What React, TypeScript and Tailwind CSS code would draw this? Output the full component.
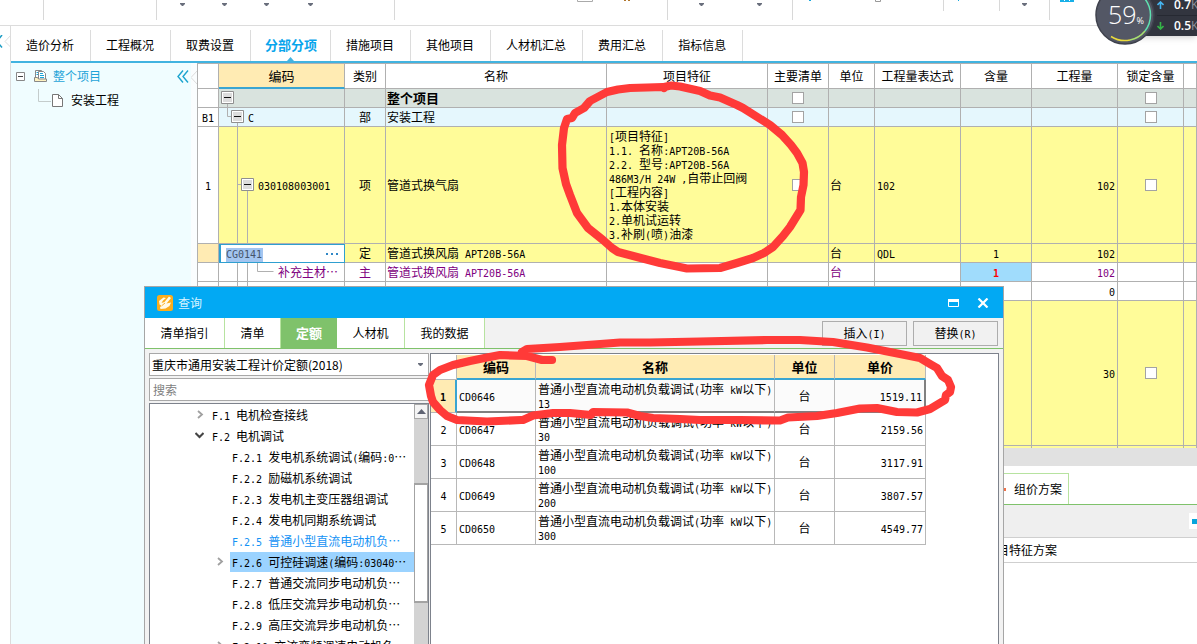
import { Fragment, type ReactNode } from 'react';
import clsx from 'clsx';

const CJK = "font-['Noto_Sans_CJK_SC','Liberation_Sans',sans-serif]";
const MONO = "font-['DejaVu_Sans_Mono','Liberation_Mono',monospace] text-[10px] leading-none whitespace-pre-wrap";

// Latin runs are half as wide as a Chinese character, as in the grid's own font
function Mix({ children }: { children: string }) {
  return (
    <>
      {children.split(/([\x20-\x7e]+)/).filter(Boolean).map((part, i) =>
        /^[\x20-\x7e]/.test(part)
          ? <span key={i} className={MONO}>{part}</span>
          : <Fragment key={i}>{part}</Fragment>
      )}
    </>
  );
}

interface RibbonGroup { w: string; carets?: number[]; short?: boolean; extra?: ReactNode }

const ribbon: RibbonGroup[] = [
  { w: 'w-[44px]' },
  { w: 'w-[113px]' },
  { w: 'w-[238px]', carets: [25, 67, 109, 153] },
  { w: 'w-[273px]', extra: <><path d="M182.500 -3v4.500h15v-4.500" fill="none" stroke="#aaa" /><path d="M229 0h2v1h-2zM233 0h2v1h-2z" fill="#b0762c" /></> },
  { w: 'w-[125px]', carets: [33, 91] },
  { w: 'w-[151px]', short: true, extra: <><path d="M16 0h2v1h-2z" fill="#18a8dd" /><path d="M82.500 -3v4.500h5v-4.500" fill="none" stroke="#999" /></> },
  { w: 'w-[56px]', short: true, extra: <path d="M14 0h1v1h-1z" fill="#18a8dd" /> },
  { w: 'w-[50px]', carets: [24] },
];

const tabs = ['造价分析', '工程概况', '取费设置', '分部分项', '措施项目', '其他项目', '人材机汇总', '费用汇总', '指标信息'];

function Ribbon() {
  return (
    <header className="flex h-[26px] shrink-0 overflow-hidden border-b border-[#dcdcdc] bg-white">
      {ribbon.map((g, i) => (
        <div key={i} className={clsx('shrink-0 border-r border-[#d8d8d8]', g.w, g.short ? 'h-[11px]' : 'h-5')}>
          <svg className="h-full w-full" aria-hidden="true">
            {g.carets?.map((x) => <path key={x} d={`M${x - 2} 3h5v1l-2 2h-1l-2-2z`} fill="#696e7c" />)}
            {g.extra}
          </svg>
        </div>
      ))}
      <svg className="ml-[10px] h-[2px] w-[14px]" aria-hidden="true">
        <path d="M0 0h14v2H0z" fill="#18b0e8" /><path d="M4 0h1v1h-1zM9 0h1v1h-1z" fill="#fff" />
      </svg>
    </header>
  );
}

function TabBar() {
  return (
    <nav className="flex h-[37px] shrink-0 items-stretch border-b-2 border-[#41b3e0] bg-white pt-1">
      {tabs.map((t) => {
        const active = t === '分部分项';
        return (
          <button
            key={t}
            className={clsx(
              'relative shrink-0 border-r border-[#dcdcdc] pb-0.5',
              active ? 'pr-[13px] pl-3.5 text-[13px] font-bold text-[#08a5ec]' : 'pr-4 pl-[15px]',
            )}
          >
            {t}
            {active && (
              <svg className="absolute bottom-0 left-9 h-1 w-[7px]" viewBox="0 0 7 4" aria-hidden="true"><path d="M0 4 3.500 0 7 4z" fill="#41b3e0" /></svg>
            )}
          </button>
        );
      })}
    </nav>
  );
}

function ProjectTree() {
  return (
    <aside className="w-[180px] shrink-0 bg-[#f0fdff] pt-[3px]">
      <div className="flex h-5 items-center pl-[5px]">
        <svg width="9" height="9" aria-hidden="true"><path d="M.5.5h8v8h-8z" fill="#fff" stroke="#888" /><path d="M2 4h5v1H2z" fill="#444" /></svg>
        <svg className="ml-[9px]" width="13" height="12" viewBox="0 0 13 12" aria-hidden="true">
          <path d="M1.500 9V.5h6l1 1" fill="#fff" stroke="#888" />
          <path d="M4.500 9V1.500h5l2 2V9" fill="#fff" stroke="#888" />
          <path d="M2.500 2.500h1.500M2.500 4.500h1.500M6 3.500h3M6 5.500h4M6 7.500h4" stroke="#1ba4d6" />
          <path d="M.5 7.500h3l1 1.500h8v2.500H.5z" fill="#fff2c0" stroke="#888" />
        </svg>
        <span className="ml-1.5 text-[#1ea4d8]">整个项目</span>
        <button className="mr-0.5 ml-auto" aria-label="收起">
          <svg width="12" height="13" viewBox="0 0 12 13" fill="none" stroke="#1ba4cf" strokeWidth="1.400" aria-hidden="true">
            <path d="M6 .5 1 6.500l5 6M11 .5 6 6.500l5 6" />
          </svg>
        </button>
      </div>
      <div className="flex h-7 items-center pl-[27px]">
        <svg width="13" height="14" className="mb-2" aria-hidden="true"><path d="M.5 0v12.500H13" fill="none" stroke="#c4cccc" /></svg>
        <svg className="ml-px" width="11" height="13" aria-hidden="true">
          <path d="M.5.5h6l4 4v8H.5z" fill="#fff" stroke="#777" /><path d="M6.500.5v4h4" fill="none" stroke="#777" />
        </svg>
        <span className="ml-2">安装工程</span>
      </div>
    </aside>
  );
}

interface GridRow {
  id: string; no: string; tone: string; height: string;
  code: ReactNode; lines?: string; box?: [number, number];
  kind?: string; name?: string; feature?: string[];
  main?: boolean; unit?: string; expr?: string; ratio?: string; qty?: string; lock?: boolean;
  purple?: boolean; bold?: boolean; editing?: boolean;
}

const gridRows: GridRow[] = [
  { id: 'root', no: '', tone: 'bg-[#d9e3de]', height: 'h-[19px]', code: '', lines: 'M8.500 15v4', box: [2, 2], name: '整个项目', main: true, lock: true, bold: true },
  { id: 'b1', no: 'B1', tone: 'bg-[#e5f7fd]', height: 'h-[19px]', code: <span className="pl-[29px]"><Mix>C</Mix></span>, lines: 'M8.500 0v8.500h4M18.500 15v4', box: [12, 2], kind: '部', name: '安装工程', main: true, lock: true },
  {
    id: 'fan', no: '1', tone: 'bg-[#fffc99]', height: 'h-[117px]', code: <span className="pl-[39px]"><Mix>030108003001</Mix></span>,
    lines: 'M18.500 0v117M18.500 57.500h4M28.500 64v53', box: [22, 51], kind: '项', name: '管道式换气扇',
    feature: ['[项目特征]', '1.1. 名称:APT20B-56A', '2.2. 型号:APT20B-56A', '486M3/H 24W ,自带止回阀', '[工程内容]', '1.本体安装', '2.单机试运转', '3.补刷(喷)油漆'],
    main: true, unit: '台', expr: '102', qty: '102', lock: true,
  },
  { id: 'cg', no: '', tone: 'bg-[#fffc99]', height: 'h-[19px]', code: '', editing: true, kind: '定', name: '管道式换风扇 APT20B-56A', unit: '台', expr: 'QDL', ratio: '1', qty: '102' },
  { id: 'extra', no: '', tone: 'bg-white', height: 'h-[19px]', code: <span className="pl-[59px]">补充主材…</span>, lines: 'M18.500 0v19M28.500 0v19M38.500 0v8.500h16', kind: '主', name: '管道式换风扇 APT20B-56A', unit: '台', ratio: '1', qty: '102', purple: true },
  { id: 'blank', no: '', tone: 'bg-white', height: 'h-[19px]', code: '', lines: 'M18.500 0v19M28.500 0v19', qty: '0' },
  { id: 'two', no: '', tone: 'bg-[#fffc99]', height: 'h-[145px]', code: '', lines: 'M18.500 0v145', qty: '30', lock: true },
];

const gridHeads: [string, string][] = [
  ['', 'w-[21px]'], ['编码', 'w-[126px]'], ['类别', 'w-[41px]'], ['名称', 'w-[221px]'], ['项目特征', 'w-[161px]'], ['主要清单', 'w-[61px]'],
  ['单位', 'w-[46px]'], ['工程量表达式', 'w-[86px]'], ['含量', 'w-[71px]'], ['工程量', 'w-[86px]'], ['锁定含量', 'w-[66px]'], ['', ''],
];

const cell = 'border-r border-b border-[#b0b0b0] p-0 leading-[14px]';

function Tick({ label }: { label: string }) {
  return <input type="checkbox" aria-label={label} className="mx-auto block size-3 appearance-none border border-[#a3a3a3] bg-white" />;
}

function CodeCell({ row }: { row: GridRow }) {
  if (row.editing) {
    return (
      <td className="border border-l-2 border-[#2f9fd0] bg-white p-0">
        <div className="flex h-[16px] items-center justify-between pr-1.5 pl-[5px]">
          <input aria-label="编码" defaultValue="CG0141" className={clsx(MONO, 'mt-0.5 h-[14px] w-[37px] bg-[#a3c5f0] p-0 text-[#44546c]')} />
          <button aria-label="选择">
            <svg width="12" height="2" aria-hidden="true"><path d="M0 0h2v2H0zM5 0h2v2H5zM10 0h2v2h-2z" fill="#2f87c6" /></svg>
          </button>
        </div>
      </td>
    );
  }
  return (
    <td className={cell}>
      <div className={clsx('relative -mb-px flex items-center pb-px', row.height)}>
        <svg className="absolute inset-0 h-full w-full" aria-hidden="true">
          {row.lines && <path d={row.lines} fill="none" stroke="#b0b0b0" />}
          {row.box && (
            <g transform={`translate(${row.box[0]} ${row.box[1]})`}>
              <path d="M.5.5h12v12H.5z" fill="#fff" stroke="#8f8f8f" />
              <path d="M2 2h9v9H2z" fill="#dcdcdc" />
              <path d="M3 6h7v1H3z" fill="#111" />
            </g>
          )}
        </svg>
        {row.code}
      </div>
    </td>
  );
}

function BillGrid() {
  return (
    <table className="w-full table-fixed border-separate border-spacing-0 border-t border-l border-[#b0b0b0]">
      <thead>
        <tr>
          {gridHeads.map(([h, w], i) => (
            <th
              key={i}
              className={clsx('h-[25px] border-r border-b border-[#b0b0b0] p-0 font-normal whitespace-nowrap', w, i === 1 && 'border-b-2 border-b-[#3aa5d2] bg-[#ffebb3] text-[13px] font-bold')}
            >
              {h}
            </th>
          ))}
        </tr>
      </thead>
      <tbody>
        {gridRows.map((r) => (
          <tr key={r.id} className={clsx(r.height, r.tone, r.purple && 'text-[#800080]')}>
            <td className={clsx(cell, 'text-center', r.editing ? 'bg-[#ffebb3]' : 'bg-white')}><Mix>{r.no}</Mix></td>
            <CodeCell row={r} />
            <td className={clsx(cell, 'text-center')}>{r.kind}</td>
            <td className={clsx(cell, 'pl-px', r.bold && 'text-[13px] font-bold')}><Mix>{r.name ?? ''}</Mix></td>
            <td className={clsx(cell, 'pl-0.5')}>
              {r.feature?.map((f) => <div key={f} className="h-[14px]"><Mix>{f}</Mix></div>)}
            </td>
            <td className={cell}>{r.main && <Tick label="主要清单" />}</td>
            <td className={clsx(cell, 'pl-px')}>{r.unit}</td>
            <td className={clsx(cell, 'pl-0.5')}><Mix>{r.expr ?? ''}</Mix></td>
            <td className={clsx(cell, 'text-center', r.purple && 'bg-[#a0dcfc] font-bold text-[#ff0000]')}><Mix>{r.ratio ?? ''}</Mix></td>
            <td className={clsx(cell, 'pr-0.5 text-right')}><Mix>{r.qty ?? ''}</Mix></td>
            <td className={cell}>{r.lock && <Tick label="锁定含量" />}</td>
            <td className={cell} />
          </tr>
        ))}
        <tr className="h-0.5 bg-[#fffc99]">
          {gridHeads.map((_, i) => <td key={i} className="border-r border-[#b0b0b0] p-0" />)}
        </tr>
      </tbody>
    </table>
  );
}

function SchemePanel() {
  return (
    <section className="flex flex-1 flex-col bg-white">
      <div className="h-[18px] bg-[#e1e1e1]" />
      <div className="flex h-[39px] items-end border-b border-[#7fc26b] pl-[790px]">
        <button className="relative h-[31px] border-t border-r border-[#b7e3a0] pr-1.5 pl-[27px]">
          <span className="absolute top-3.5 left-4 size-[3px] bg-[#f07048]" />
          组价方案
        </button>
      </div>
      <div className="flex h-[33px] items-center justify-end border-b border-[#cfcfcf] bg-[#efefef]">
        <div className="flex h-4 w-2 items-center justify-end bg-white"><span className="h-[5px] w-[5px] bg-[#08a5dc]" /></div>
      </div>
      <div className="flex h-[25px] items-center border-b border-[#cfcfcf] pl-[788px]">项目特征方案</div>
    </section>
  );
}

interface TreeNode { text: string; level: 1 | 2; arrow?: 'open' | 'closed'; state?: 'link' | 'selected' }

const treeNodes: TreeNode[] = [
  { text: 'F.1 电机检查接线', level: 1, arrow: 'closed' },
  { text: 'F.2 电机调试', level: 1, arrow: 'open' },
  { text: 'F.2.1 发电机系统调试(编码:0…', level: 2 },
  { text: 'F.2.2 励磁机系统调试', level: 2 },
  { text: 'F.2.3 发电机主变压器组调试', level: 2 },
  { text: 'F.2.4 发电机同期系统调试', level: 2 },
  { text: 'F.2.5 普通小型直流电动机负…', level: 2, state: 'link' },
  { text: 'F.2.6 可控硅调速(编码:03040…', level: 2, arrow: 'closed', state: 'selected' },
  { text: 'F.2.7 普通交流同步电动机负…', level: 2 },
  { text: 'F.2.8 低压交流异步电动机负…', level: 2 },
  { text: 'F.2.9 高压交流异步电动机负…', level: 2 },
  { text: 'F.2.10 交流变频调速电动机负…', level: 2, arrow: 'closed' },
];

const quotas = [
  { code: 'CD0646', size: '13',  price: '1519.11' },
  { code: 'CD0647', size: '30',  price: '2159.56' },
  { code: 'CD0648', size: '100', price: '3117.91' },
  { code: 'CD0649', size: '200', price: '3807.57' },
  { code: 'CD0650', size: '300', price: '4549.77' },
];

function QuotaTree() {
  return (
    <div className="flex min-h-0 flex-1 overflow-hidden border border-b-0 border-[#7d828c] bg-white">
      <ul className="min-w-0 flex-1">
        {treeNodes.map((n) => (
          <li key={n.text} className={clsx('flex h-[21px] items-center', n.level === 1 ? 'pl-[43px]' : 'pl-[63px]')}>
            <span className={clsx('w-[17px] shrink-0', n.arrow === 'open' ? 'pl-0.5' : 'pl-1')}>
              {n.arrow === 'closed' && (
                <svg width="7" height="9" viewBox="0 0 7 9" fill="none" stroke="#a0a0a0" strokeWidth="1.800" aria-hidden="true"><path d="m1 1 4 3.500L1 8" /></svg>
              )}
              {n.arrow === 'open' && (
                <svg width="9" height="7" viewBox="0 0 9 7" fill="none" stroke="#444" strokeWidth="2" aria-hidden="true"><path d="m.5 1 4 4 4-4" /></svg>
              )}
            </span>
            <span
              className={clsx(
                'flex-1 truncate pl-0.5 leading-5',
                n.state === 'selected' && 'bg-[#9bd3ff]',
                n.state === 'link' && 'text-[#1492f5]',
              )}
            >
              <Mix>{n.text}</Mix>
            </span>
          </li>
        ))}
      </ul>
      <div className="flex w-[14px] shrink-0 flex-col bg-[#d3d3d3]">
        <button aria-label="向上滚动" className="flex h-[15px] items-center justify-center border border-[#a8a8a8] bg-[#f4f4f4]">
          <svg width="9" height="5" aria-hidden="true"><path d="M0 5 4.500 0 9 5z" fill="#5f6473" /></svg>
        </button>
        <div className="mt-16 h-[120px] border border-t-2 border-b-2 border-[#a3a3a3] bg-white" />
      </div>
    </div>
  );
}

function QuotaTable() {
  const td = 'border-r border-b border-[#b8b8b8] p-0';
  const th = 'h-[25px] border-r border-b-2 border-[#b8b8b8] border-b-[#3aa5d2] bg-[#ffebb3] p-0 text-[13px] font-bold';
  return (
    <div className="min-w-0 flex-1 overflow-hidden border border-b-0 border-[#7d828c] bg-white pt-px">
      <table className="table-fixed border-separate border-spacing-0">
        <thead>
          <tr>
            <th className="w-[26px] border-r border-b border-[#b8b8b8] p-0" />
            <th className={clsx(th, 'w-[79px]')}>编码</th>
            <th className={clsx(th, 'w-[239px]')}>名称</th>
            <th className={clsx(th, 'w-[60px]')}>单位</th>
            <th className={clsx(th, 'w-[91px]')}>单价</th>
          </tr>
        </thead>
        <tbody>
          {quotas.map((q, i) => {
            const on = i === 0;
            const line = on && 'border-b-2 border-b-[#808080] bg-[#fbfbfb]';
            return (
              <tr key={q.code} className="h-[33px]">
                <td className={clsx(td, 'text-center', on && 'border-r-2 border-r-[#3aa5d2] bg-[#ffebb3] font-bold')}><Mix>{String(i + 1)}</Mix></td>
                <td className={clsx(td, 'pl-0.5', line)}><Mix>{q.code}</Mix></td>
                <td className={clsx(td, 'pl-0.5 leading-[14px] whitespace-nowrap', line)}>
                  <Mix>普通小型直流电动机负载调试(功率 kW以下)</Mix>
                  <div className="h-[14px]"><Mix>{q.size}</Mix></div>
                </td>
                <td className={clsx(td, 'text-center', line)}>台</td>
                <td className={clsx(td, 'pr-0.5 text-right', line, on && 'border-r-2 border-r-[#808080]')}><Mix>{q.price}</Mix></td>
              </tr>
            );
          })}
        </tbody>
      </table>
    </div>
  );
}

function QueryDialog() {
  const tab = 'h-full border-r border-[#b7e3a0] bg-white';
  return (
    <section role="dialog" aria-label="查询" className="absolute top-[286px] right-[193px] bottom-0 left-[144px] flex flex-col border border-b-0 border-[#a6a6a6] bg-[#f2f2f2]">
      <div className="flex h-[31px] shrink-0 items-center bg-[#02a9f3] pr-[14px] pl-3 text-[#d9f4ff]">
        <svg width="16" height="16" viewBox="0 0 16 16" aria-hidden="true">
          <rect width="16" height="16" rx="2.500" fill="#fbad1c" />
          <path d="M2 6 6.500 2.500 9 3 6 5.500 4.500 8 7.500 7 12 1.500 14 3 9.500 8.500 14 7.500 12.500 11 8.500 13.500 3.500 14 3 12 5 11 2.500 9.500z" fill="#fffbe8" />
          <path d="M5 10.500 8 8" stroke="#fbad1c" strokeWidth=".9" />
        </svg>
        <span className="ml-[5px]">查询</span>
        <button aria-label="最大化" className="mr-[18px] ml-auto">
          <svg width="11" height="8" aria-hidden="true"><path d="M.5.5h10v7H.5z" fill="none" stroke="#fff" /><path d="M0 0h11v3H0z" fill="#fff" /></svg>
        </button>
        <button aria-label="关闭">
          <svg width="12" height="10" viewBox="0 0 12 10" stroke="#fff" strokeWidth="2.200" aria-hidden="true"><path d="m1.500.5 9 9M10.500.5l-9 9" /></svg>
        </button>
      </div>
      <div className="flex h-[31px] shrink-0 items-center border-b border-[#7fc26b] pr-[5px]">
        <button className={clsx(tab, 'w-20')}>清单指引</button>
        <button className={clsx(tab, 'w-14')}>清单</button>
        <button className="h-full w-14 bg-[#7fc26b] text-[13px] font-bold text-white">定额</button>
        <button className={clsx(tab, 'w-[68px]')}>人材机</button>
        <button className={clsx(tab, 'w-20')}>我的数据</button>
        <div className="ml-auto flex gap-1.5">
          <button className="h-[25px] w-[85px] border border-[#adadad] bg-[#f1f1f1]"><Mix>插入(I)</Mix></button>
          <button className="h-[25px] w-[85px] border border-[#adadad] bg-[#f1f1f1]"><Mix>替换(R)</Mix></button>
        </div>
      </div>
      <div className="flex min-h-0 flex-1 gap-px px-1 pt-1">
        <div className="flex w-[280px] shrink-0 flex-col gap-0.5">
          <div className="relative">
            <select aria-label="定额库" className="block h-[23px] w-full appearance-none border border-[#a8a8a8] bg-white pl-0.5">
              <option>重庆市通用安装工程计价定额(2018)</option>
            </select>
            <svg className="pointer-events-none absolute top-2.5 right-1.5" width="5" height="3" aria-hidden="true"><path d="M0 0h5v1L3 3H2L0 1z" fill="#696e7c" /></svg>
          </div>
          <input aria-label="搜索" placeholder="搜索" className="h-[23px] border border-[#a8a8a8] bg-white px-[3px] placeholder:text-[#808080]" />
          <QuotaTree />
        </div>
        <QuotaTable />
      </div>
    </section>
  );
}

function SpeedBall() {
  return (
    <div className="absolute top-0 right-0 h-[46px] w-[103px] overflow-hidden font-['Open_Sans','Noto_Sans',sans-serif]">
      <div className="ml-8 flex h-9 flex-col bg-[#32353f] pl-[31px] text-white shadow-md">
        {[['0.7', '#45b4f0', 'M3.500 8V1M.5 4l3-3 3 3'], ['0.5', '#35b548', 'M3.500 0v7M.5 4l3 3 3-3']].map(([n, color, d], i) => (
          <div key={n} className={clsx('flex items-center gap-[10px]', i ? 'h-[21px] border-t border-[#262932]' : 'h-[15px] pb-1.5')}>
            <svg width="7" height="8" viewBox="0 0 7 8" className="shrink-0" fill="none" stroke={color} strokeWidth="1.600" aria-hidden="true"><path d={d} /></svg>
            <span className="leading-none font-semibold whitespace-nowrap">{n}<span className="font-normal text-[#8f939e]">K</span></span>
          </div>
        ))}
      </div>
      <svg className="absolute inset-0 h-full w-full" aria-hidden="true">
        <circle cx="31" cy="15" r="29" fill="#535765" stroke="#3e414c" strokeWidth="1.500" />
        <path d="M51 -1A26 26 0 0 1 51 31" fill="none" stroke="#5fe0b0" strokeWidth="1.500" />
        <path d="M51 31A26 26 0 0 1 36 40" fill="none" stroke="#a8e070" strokeWidth="1.500" />
        <path d="M36 40A26 26 0 0 1 17 36.500" fill="none" stroke="#eadb3c" strokeWidth="1.500" />
      </svg>
      <div className="absolute top-0 left-3.5 flex items-baseline text-white">
        <span className="text-[25px] leading-7 font-light">59</span>
        <span className="text-[9px]">%</span>
      </div>
    </div>
  );
}

// Hand-drawn red marks round the item's features and the first quota
function Marks() {
  return (
    <svg className="pointer-events-none absolute inset-0 h-full w-full" fill="none" stroke="#ff3a38" strokeWidth="8.200" strokeLinejoin="round" strokeLinecap="round" aria-hidden="true">
      <path d="M664 88 663 87 647 87.500 630 88 618 89.500 607 92 590 101 584 108 575 113 572 118 567 119 564 128 562 145 562.500 168 566 184 570 195 577 213 588 228 603 240 612 248 618 252 637 257 660 263 687 268.500 720 268 737 263 753 258 764 253 773 247 783 236 790 227 800.500 210 801 197 803.500 185 804 172 802.500 163 797 153 791 145 782 135 770 125 743 108 737 105 720 97.500 710 95.500 700 91 680 86.500 671 85.500 664 87" />
      <path d="M522 352 527 349 560 347 587 345 620 342.500 650 342.500 700 341.500 767 340 800 340 833 342 867 347.500 900 354 920 358 930 364 937 368 942 376 948 380 951 387 950 392 946 395 945 400 930 409 917 412.500 897 412 877 408 860 408.500 837 413 817 416 788 417.500 780 420.500 740 420 700 420 680 419 653 418 640 416 627 412.500 593 412 591 415 570 413 553 413 533 415.500 523 420 521 420 487 421.500 457 420 447 416 440 410 433 402 431 396 429 385 433 375 440 370 453 365 470 361 487 357.500 500 355 527 356 542 360 552 360" />
    </svg>
  );
}

export default function App() {
  return (
    <div lang="zh-CN" className={clsx('relative flex h-screen flex-col overflow-hidden bg-white text-xs text-black', CJK)}>
      <Ribbon />
      <div className="flex min-h-0 flex-1">
        <div className="w-[11px] shrink-0 border-r border-[#dcdcdc] pt-[9px]">
          <svg width="11" height="13" fill="none" aria-hidden="true">
            <path d="M2 0-3 6.500l5 6" stroke="#1b9cc4" strokeWidth="1.500" />
            <path d="m11 0-6 6.500 6 6" stroke="#dcdcdc" />
          </svg>
        </div>
        <div className="flex min-w-0 flex-1 flex-col">
          <TabBar />
          <div className="flex min-h-0 flex-1">
            <ProjectTree />
            <div className="w-1.5 shrink-0 bg-[#fafdfe] pt-2">
              <svg width="6" height="13" fill="none" stroke="#dcdcdc" aria-hidden="true"><path d="M6 0 0 6.500 6 13" /></svg>
            </div>
            <main className="flex min-w-0 flex-1 flex-col">
              <BillGrid />
              <SchemePanel />
            </main>
          </div>
        </div>
      </div>
      <QueryDialog />
      <SpeedBall />
      <Marks />
    </div>
  );
}
